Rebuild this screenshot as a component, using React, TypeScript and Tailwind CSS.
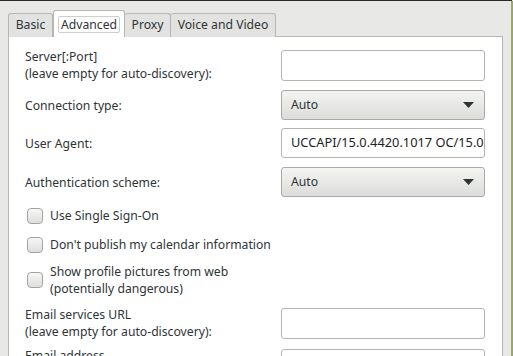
import React from "react";

const font = { fontFamily: '"Noto Sans", "Open Sans", sans-serif' };

function Label({ lines }: { lines: string[] }) {
  return (
    <div className="flex flex-col text-[12.2px] leading-[17px] text-[#2e3436]">
      {lines.map((l) => (
        <span key={l} className="whitespace-nowrap">{l}</span>
      ))}
    </div>
  );
}

function TextInput({ value }: { value?: string }) {
  return (
    <div className="w-[204px] h-[31px] shrink-0 rounded-[3px] border border-[#b4b4b2] bg-white flex items-center pl-[9px] overflow-hidden">
      <span className="text-[12px] text-[#1e1e1e] whitespace-nowrap">{value}</span>
    </div>
  );
}

function Select({ value }: { value: string }) {
  return (
    <div className="w-[204px] h-[30px] shrink-0 rounded-[3px] border border-[#a9a9a7] bg-gradient-to-b from-[#f4f4f3] to-[#dcdcda] flex items-center justify-between pl-[9px] pr-[10px]">
      <span className="text-[12.2px] text-[#2e3436]">{value}</span>
      <svg width="11" height="6" viewBox="0 0 11 6">
        <path d="M0 0 L11 0 L5.5 6 Z" fill="#2e3436" />
      </svg>
    </div>
  );
}

function Check({ lines }: { lines: string[] }) {
  return (
    <div className="flex items-center gap-[7px]">
      <div className="w-[16px] h-[16px] rounded-[4px] border border-[#a3a3a1] bg-gradient-to-b from-[#f6f6f5] to-[#dedede]" />
      <Label lines={lines} />
    </div>
  );
}

export default function App() {
  return (
    <div className="w-[513px] h-[356px] overflow-hidden bg-[#e8e8e7] flex flex-col" style={font}>
      <div className="h-[1px] w-[512px] bg-[#2a2a2a] shrink-0" />
      <div className="flex flex-1 min-h-0">
        <div className="w-[503px] pl-[8px] pt-[9px] flex flex-col min-h-0">
          {/* tabs */}
          <div className="flex items-end h-[27px] relative z-10">
            <div className="h-[24px] w-[45px] border border-b-0 border-[#b6b6b3] rounded-t-[3px] bg-[#e2e2e0] flex items-center justify-center text-[12.2px] text-[#2e3436]">
              Basic
            </div>
            <div className="h-[27px] w-[72px] border border-b-0 border-[#b6b6b3] rounded-t-[3px] bg-white flex items-center justify-center">
              <span className="border border-[#cfcfcd] rounded-[2px] px-[2px] leading-[15px] text-[12.2px] text-[#2e3436]">Advanced</span>
            </div>
            <div className="h-[24px] w-[46px] border border-b-0 border-l-0 border-[#b6b6b3] rounded-t-[3px] bg-[#e2e2e0] flex items-center justify-center text-[12.2px] text-[#2e3436]">
              Proxy
            </div>
            <div className="h-[24px] w-[105px] border border-b-0 border-l-0 border-[#b6b6b3] rounded-t-[3px] bg-[#e2e2e0] flex items-center justify-center text-[12.2px] text-[#2e3436]">
              Voice and Video
            </div>
          </div>
          {/* panel */}
          <div className="flex-1 -mt-[1px] border border-[#b6b6b3] border-b-0 bg-white pl-[16px] pr-[17px] pt-[11px] flex flex-col">
            <div className="flex items-center justify-between">
              <Label lines={["Server[:Port]", "(leave empty for auto-discovery):"]} />
              <TextInput />
            </div>
            <div className="flex items-center justify-between mt-[8px]">
              <Label lines={["Connection type:"]} />
              <Select value="Auto" />
            </div>
            <div className="flex items-center justify-between mt-[8px]">
              <Label lines={["User Agent:"]} />
              <div className="w-[204px] h-[30px] shrink-0 rounded-[3px] border border-[#b4b4b2] bg-white flex items-center pl-[9px] overflow-hidden">
                <span className="text-[12.8px] text-[#1e1e1e] whitespace-nowrap">UCCAPI/15.0.4420.1017 OC/15.0.4420.1017</span>
              </div>
            </div>
            <div className="flex items-center justify-between mt-[9px]">
              <Label lines={["Authentication scheme:"]} />
              <Select value="Auto" />
            </div>
            <div className="pl-[2px] mt-[10px] h-[17px] flex items-center">
              <Check lines={["Use Single Sign-On"]} />
            </div>
            <div className="pl-[2px] mt-[12px] h-[17px] flex items-center">
              <Check lines={["Don't publish my calendar information"]} />
            </div>
            <div className="pl-[2px] mt-[10px] flex items-center">
              <Check lines={["Show profile pictures from web", "(potentially dangerous)"]} />
            </div>
            <div className="flex items-center justify-between mt-[9px]">
              <Label lines={["Email services URL", "(leave empty for auto-discovery):"]} />
              <TextInput />
            </div>
            <div className="flex items-center justify-between mt-[7px]">
              <Label lines={["Email address", "(leave empty to use Login name):"]} />
              <TextInput />
            </div>
          </div>
        </div>
        <div className="w-[8px]" />
        <div className="w-[2px] bg-[#9aa56a]" />
      </div>
    </div>
  );
}
